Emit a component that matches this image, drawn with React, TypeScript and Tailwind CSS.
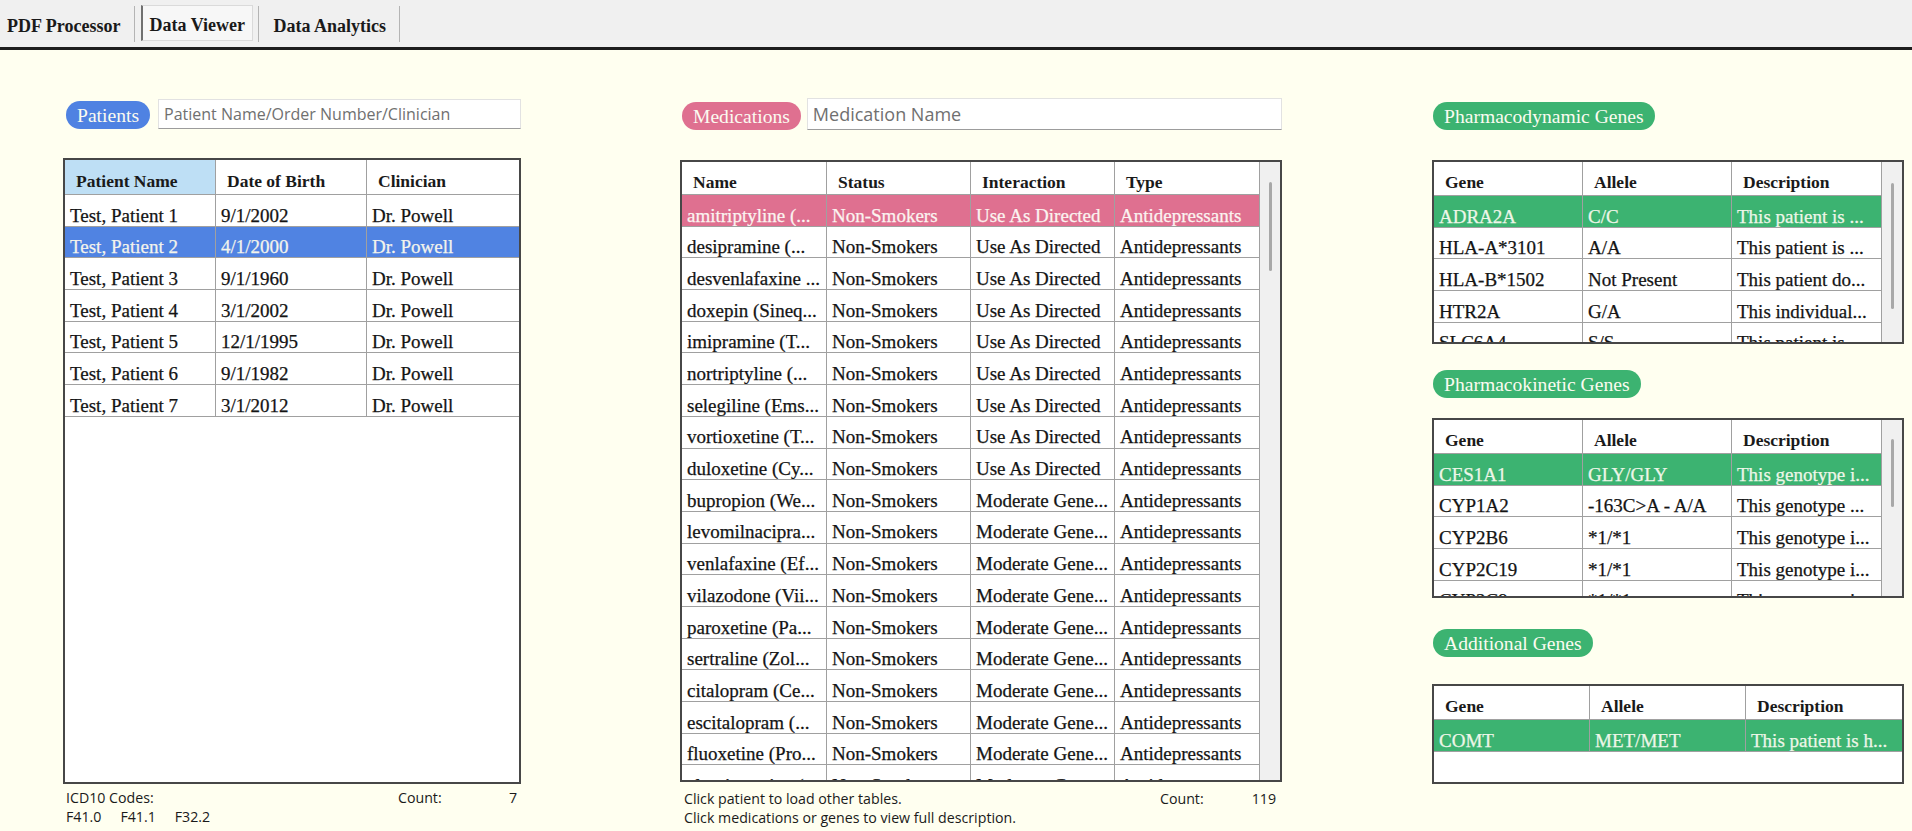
import React from "react";

type Row = { cells: string[]; sel?: boolean };

function Pill({ label, bg }: { label: string; bg: string }) {
  return (
    <div
      className={`h-[28px] rounded-full px-[11px] flex items-center pt-[2px] text-[19.6px] leading-none text-[#fbfbf0] whitespace-nowrap ${bg}`}
    >
      {label}
    </div>
  );
}

function DataGrid({
  cols,
  headers,
  rows,
  heightClass,
  headerClass,
  selClass,
  firstHeaderClass = "",
  thumbClass,
}: {
  cols: string;
  headers: string[];
  rows: Row[];
  heightClass: string;
  headerClass: string;
  selClass: string;
  firstHeaderClass?: string;
  thumbClass?: string;
}) {
  const n = headers.length;
  return (
    <div className={`border-2 border-[#474747] bg-white flex overflow-hidden ${heightClass}`}>
      <div className="flex-1 min-w-0 flex flex-col overflow-hidden">
        <div className={`grid shrink-0 ${cols} ${headerClass}`}>
          {headers.map((h, i) => (
            <div
              key={h}
              className={`border-b border-[#a0a0a0] flex items-center pl-[11px] pt-[8px] font-bold text-[17.5px] text-[#1a1a1a] whitespace-nowrap overflow-hidden ${
                i < n - 1 ? "border-r" : ""
              } ${i === 0 ? firstHeaderClass : ""}`}
            >
              {h}
            </div>
          ))}
        </div>
        {rows.map((r, ri) => (
          <div
            key={ri}
            className={`grid shrink-0 h-[31.7px] ${cols} ${r.sel ? selClass : "text-[#141414]"}`}
          >
            {r.cells.map((c, ci) => (
              <div
                key={ci}
                className={`border-b border-[#a0a0a0] flex items-center pl-[5px] pt-[11px] text-[19px] [-webkit-text-stroke:0.25px] whitespace-nowrap overflow-hidden ${
                  ci < n - 1 ? "border-r" : ""
                }`}
              >
                {c}
              </div>
            ))}
          </div>
        ))}
      </div>
      {thumbClass && (
        <div className="w-[21px] shrink-0 border-l border-[#a0a0a0] bg-[#f0f0f0] relative">
          <div className={`absolute left-[9px] w-[3px] rounded-full bg-[#a8a8a8] ${thumbClass}`} />
        </div>
      )}
    </div>
  );
}

const patients: Row[] = [
  { cells: ["Test, Patient 1", "9/1/2002", "Dr. Powell"] },
  { cells: ["Test, Patient 2", "4/1/2000", "Dr. Powell"], sel: true },
  { cells: ["Test, Patient 3", "9/1/1960", "Dr. Powell"] },
  { cells: ["Test, Patient 4", "3/1/2002", "Dr. Powell"] },
  { cells: ["Test, Patient 5", "12/1/1995", "Dr. Powell"] },
  { cells: ["Test, Patient 6", "9/1/1982", "Dr. Powell"] },
  { cells: ["Test, Patient 7", "3/1/2012", "Dr. Powell"] },
];

const medNames = [
  "amitriptyline (...",
  "desipramine (...",
  "desvenlafaxine ...",
  "doxepin (Sineq...",
  "imipramine (T...",
  "nortriptyline (...",
  "selegiline (Ems...",
  "vortioxetine (T...",
  "duloxetine (Cy...",
  "bupropion (We...",
  "levomilnacipra...",
  "venlafaxine (Ef...",
  "vilazodone (Vii...",
  "paroxetine (Pa...",
  "sertraline (Zol...",
  "citalopram (Ce...",
  "escitalopram (...",
  "fluoxetine (Pro...",
  "clomipramine (...",
];

const meds: Row[] = medNames.map((m, i) => ({
  cells: [m, "Non-Smokers", i < 9 ? "Use As Directed" : "Moderate Gene...", "Antidepressants"],
  sel: i === 0,
}));

const pdGenes: Row[] = [
  { cells: ["ADRA2A", "C/C", "This patient is ..."], sel: true },
  { cells: ["HLA-A*3101", "A/A", "This patient is ..."] },
  { cells: ["HLA-B*1502", "Not Present", "This patient do..."] },
  { cells: ["HTR2A", "G/A", "This individual..."] },
  { cells: ["SLC6A4", "S/S", "This patient is ..."] },
];

const pkGenes: Row[] = [
  { cells: ["CES1A1", "GLY/GLY", "This genotype i..."], sel: true },
  { cells: ["CYP1A2", "-163C>A - A/A", "This genotype ..."] },
  { cells: ["CYP2B6", "*1/*1", "This genotype i..."] },
  { cells: ["CYP2C19", "*1/*1", "This genotype i..."] },
  { cells: ["CYP2C9", "*1/*1", "This genotype i..."] },
];

const addGenes: Row[] = [{ cells: ["COMT", "MET/MET", "This patient is h..."], sel: true }];

export default function App() {
  return (
    <div className="w-[1912px] h-[831px] bg-[#fffff0] font-['Liberation_Serif',serif] overflow-hidden">
      {/* Tab bar */}
      <div className="h-[50px] bg-[#f0f0f0] border-b-[3px] border-[#1e1e1e] flex items-start pl-[7px]">
        <div className="h-[47px] flex items-center pt-[5px] font-bold text-[18px] text-[#1a1a1a] whitespace-nowrap">
          PDF Processor
        </div>
        <div className="ml-[14px] mt-[6px] w-px h-[36px] bg-[#b4b4b4]" />
        <div className="ml-[6px] mt-[5px] h-[36px] w-[112px] bg-[#f7f7f7] border border-[#dadada] border-l-2 border-l-[#707070] flex items-center pl-[6px] pt-[4px] font-bold text-[18px] text-[#1a1a1a] whitespace-nowrap">
          Data Viewer
        </div>
        <div className="ml-[5px] mt-[6px] w-px h-[36px] bg-[#b4b4b4]" />
        <div className="ml-[14px] h-[47px] flex items-center pt-[5px] font-bold text-[18px] text-[#1a1a1a] whitespace-nowrap">
          Data Analytics
        </div>
        <div className="ml-[13px] mt-[6px] w-px h-[36px] bg-[#b4b4b4]" />
      </div>

      <div className="flex pl-[63px]">
        {/* Patients column */}
        <div className="w-[458px] flex flex-col">
          <div className="mt-[49px] h-[30px] flex items-end pl-[3px]">
            <Pill label="Patients" bg="bg-[#4f82e2]" />
            <div className="ml-[8px] flex-1 h-[30px] bg-white border border-[#e2e2e2] border-b-[#9c9c9c] flex items-center pl-[5px] font-['Open_Sans',sans-serif] text-[16px] text-[#707070] whitespace-nowrap">
              Patient Name/Order Number/Clinician
            </div>
          </div>
          <div className="mt-[29px]">
            <DataGrid
              cols="grid-cols-[151px_151px_1fr]"
              headers={["Patient Name", "Date of Birth", "Clinician"]}
              rows={patients}
              heightClass="h-[626px]"
              headerClass="h-[35px]"
              selClass="bg-[#5083e2] text-[#f4f4ec]"
              firstHeaderClass="bg-[#bedff5]"
            />
          </div>
          <div className="mt-[4px] pl-[3px] pr-[4px] font-['Open_Sans',sans-serif] text-[14.2px] leading-[19px] text-[#1a1a1a]">
            <div className="flex justify-between">
              <span>ICD10 Codes:</span>
              <span className="w-[119px] flex justify-between">
                <span>Count:</span>
                <span>7</span>
              </span>
            </div>
            <div className="flex gap-[19px]">
              <span>F41.0</span>
              <span>F41.1</span>
              <span>F32.2</span>
            </div>
          </div>
        </div>

        {/* Medications column */}
        <div className="ml-[159px] w-[602px] flex flex-col">
          <div className="mt-[48px] h-[32px] flex items-end pl-[2px]">
            <Pill label="Medications" bg="bg-[#df7090]" />
            <div className="ml-[6px] flex-1 h-[32px] bg-white border border-[#e2e2e2] border-b-[#9c9c9c] flex items-center pl-[5px] font-['Open_Sans',sans-serif] text-[18px] text-[#707070] whitespace-nowrap">
              Medication Name
            </div>
          </div>
          <div className="mt-[30px]">
            <DataGrid
              cols="grid-cols-[145px_144px_144px_1fr]"
              headers={["Name", "Status", "Interaction", "Type"]}
              rows={meds}
              heightClass="h-[622px]"
              headerClass="h-[33px]"
              selClass="bg-[#df7090] text-[#fbf4f0]"
              thumbClass="top-[20px] h-[89px]"
            />
          </div>
          <div className="mt-[7px] pl-[4px] pr-[6px] font-['Open_Sans',sans-serif] text-[14.2px] leading-[19px] text-[#1a1a1a]">
            <div className="flex justify-between">
              <span>Click patient to load other tables.</span>
              <span className="w-[116px] flex justify-between">
                <span>Count:</span>
                <span>119</span>
              </span>
            </div>
            <div>Click medications or genes to view full description.</div>
          </div>
        </div>

        {/* Genes column */}
        <div className="ml-[150px] w-[472px] flex flex-col">
          <div className="mt-[52px] pl-[1px] flex">
            <Pill label="Pharmacodynamic Genes" bg="bg-[#3cb371]" />
          </div>
          <div className="mt-[30px]">
            <DataGrid
              cols="grid-cols-[149px_149px_1fr]"
              headers={["Gene", "Allele", "Description"]}
              rows={pdGenes}
              heightClass="h-[184px]"
              headerClass="h-[34px]"
              selClass="bg-[#3cb371] text-[#eef6e8]"
              thumbClass="top-[21px] h-[126px]"
            />
          </div>
          <div className="mt-[26px] pl-[1px] flex">
            <Pill label="Pharmacokinetic Genes" bg="bg-[#3cb371]" />
          </div>
          <div className="mt-[20px]">
            <DataGrid
              cols="grid-cols-[149px_149px_1fr]"
              headers={["Gene", "Allele", "Description"]}
              rows={pkGenes}
              heightClass="h-[180px]"
              headerClass="h-[34px]"
              selClass="bg-[#3cb371] text-[#eef6e8]"
              thumbClass="top-[19px] h-[68px]"
            />
          </div>
          <div className="mt-[31px] pl-[1px] flex">
            <Pill label="Additional Genes" bg="bg-[#3cb371]" />
          </div>
          <div className="mt-[27px]">
            <DataGrid
              cols="grid-cols-[156px_156px_1fr]"
              headers={["Gene", "Allele", "Description"]}
              rows={addGenes}
              heightClass="h-[100px]"
              headerClass="h-[34px]"
              selClass="bg-[#3cb371] text-[#eef6e8]"
            />
          </div>
        </div>
      </div>
    </div>
  );
}
